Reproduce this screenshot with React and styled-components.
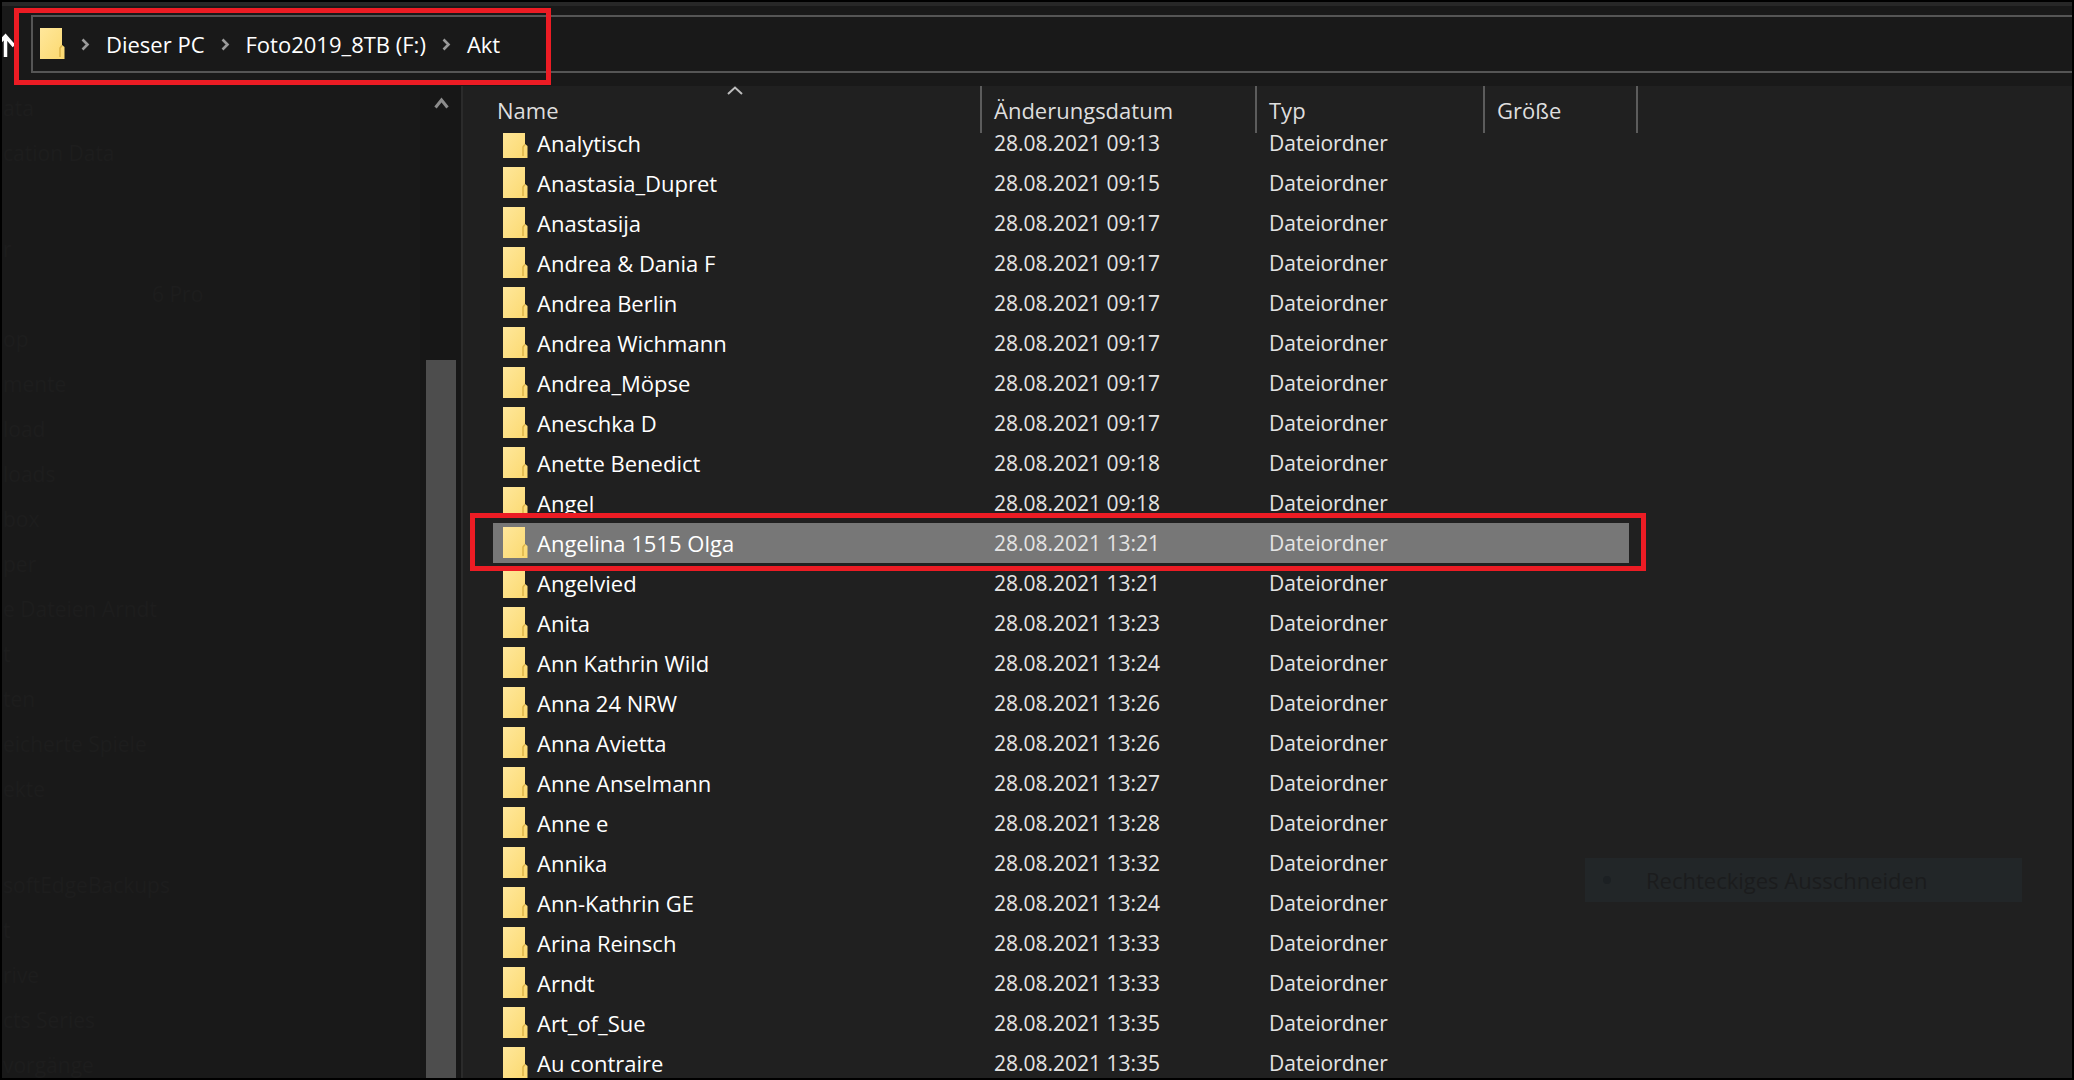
import React, { useState } from 'react'
import styled, { createGlobalStyle } from 'styled-components'

const GlobalStyle = createGlobalStyle`
  * {
    box-sizing: border-box;
  }

  body {
    margin: 0;
    background: #000;
    font-family: "Open Sans", "Noto Sans", sans-serif;
    font-size: 22px;
    color: #fff;
  }

  a {
    color: inherit;
    text-decoration: none;
  }

  button {
    padding: 0;
    border: 0;
    background: none;
    font: inherit;
    color: inherit;
  }
`

const Window = styled.div`
  display: flex;
  flex-direction: column;
  height: 100vh;
  border: 2px solid #000;
  background: #191919;
  overflow: hidden;
`

const Toolbar = styled.header`
  display: flex;
  flex: none;
  height: 84px;
  padding: 9px 0 12px;
  border-top: 4px solid #272727;
`

const UpButton = styled.button`
  display: flex;
  align-items: center;
  width: 29px;
`

const AddressBar = styled.nav`
  position: relative;
  display: flex;
  flex: 1;
  align-items: center;
  gap: 16px;
  height: 58px;
  padding-left: 7px;
  border: 2px solid #555;
  border-right: 0;
`

const Callout = styled.span`
  position: absolute;
  border: 5px solid #ec1c24;
  pointer-events: none;
`

const AddressCallout = styled(Callout)`
  top: -9px;
  left: -19px;
  width: 537px;
  height: 77px;
  z-index: 2;
`

const RowCallout = styled(Callout)`
  inset: -10px -8px -8px -23px;
  z-index: 1;
`

const Body = styled.div`
  display: flex;
  flex: 1;
  min-height: 0;
`

const Sidebar = styled.aside`
  display: flex;
  flex: 0 0 461px;
  border-right: 2px solid #2b2b2b;
  overflow: hidden;
`

const TreeList = styled.ul`
  flex: 1;
  margin: 0;
  padding: 0;
  list-style: none;
  overflow: hidden;
`

const TreeItem = styled.li`
  padding-left: ${({ $indent }) => ($indent ? '150px' : '1px')};
  font-size: 21px;
  line-height: 45px;
  color: #1d1d1d;
  white-space: nowrap;
`

const TreeGap = styled.li`
  height: 51px;
`

const Scrollbar = styled.div`
  display: flex;
  flex-direction: column;
  flex: 0 0 41px;
  padding: 0 5px 0 6px;
  background: #171717;
`

const ScrollUp = styled.button`
  display: flex;
  flex: none;
  align-items: center;
  justify-content: center;
  height: 34px;
`

const ScrollThumb = styled.div`
  flex: 1;
  margin-top: 240px;
  background: #4d4d4d;
`

const Content = styled.main`
  position: relative;
  flex: 1;
  padding-left: 30px;
  background: #202020;
  overflow: hidden;
`

const FileTable = styled.table`
  width: 1145px;
  table-layout: fixed;
  border-collapse: separate;
  border-spacing: 0;
`

const HeaderCell = styled.th`
  width: ${({ $width }) => $width};
  height: 37px;
  padding: 0;
  font-weight: 400;
  text-align: left;
  vertical-align: top;
`

const HeaderButton = styled.button`
  position: relative;
  z-index: 1;
  display: block;
  width: 100%;
  height: 47px;
  margin-bottom: -10px;
  padding-left: ${({ $first }) => ($first ? '4px' : '12px')};
  border-right: 2px solid #5c5c5c;
  background: #202020;
  color: #dedede;
  text-align: left;
`

const SortMark = styled.span`
  position: absolute;
  top: 0;
  left: 0;
  right: 4px;
  display: flex;
  justify-content: center;
`

const Row = styled.tr`
  position: relative;
`

const Cell = styled.td`
  height: 40px;
  padding: 0 0 0 12px;
  background: ${({ $selected }) => ($selected ? '#777' : 'transparent')};
  color: #e4e4e4;
  font-size: 21px;
  line-height: 40px;
  white-space: nowrap;
`

const NameCell = styled(Cell)`
  padding-left: 10px;
  color: #fff;
  font-size: 22px;
`

const SizeCell = styled(Cell)`
  position: relative;
  border-right: 9px solid transparent;
  background-clip: padding-box;
`

const FileName = styled.div`
  display: flex;
  align-items: center;
  gap: 9px;
  height: 40px;
`

const SnipHint = styled.div`
  position: absolute;
  right: 50px;
  bottom: 176px;
  display: flex;
  align-items: center;
  gap: 35px;
  width: 437px;
  height: 44px;
  padding-left: 18px;
  background: #222628;
  color: #1b1c1d;
`

const Bullet = styled.i`
  width: 8px;
  height: 8px;
  border-radius: 50%;
  background: #1c2023;
`

const FolderIcon = () =>
  <svg width="25" height="32" viewBox="0 0 25 32" aria-hidden="true">
    <defs>
      <linearGradient id="folder" x1="0" y1="0" x2="1" y2="1">
        <stop offset="0" stopColor="#ffe79b" />
        <stop offset="1" stopColor="#fbd96f" />
      </linearGradient>
    </defs>
    <path d="M0 0H22V17L24.500 19V31H0Z" fill="url(#folder)" />
    <path d="M20 29V20L22 17.500" fill="none" stroke="#dcb448" strokeWidth="1.500" />
  </svg>

const Chevron = () =>
  <svg width="9" height="13" viewBox="0 0 9 13" aria-hidden="true">
    <path d="M1.500 1.500L6.500 6.500L1.500 11.500" fill="none" stroke="#9a9a9a" strokeWidth="2.600" />
  </svg>

const folders = [
  ['Analytisch', '28.08.2021 09:13'],
  ['Anastasia_Dupret', '28.08.2021 09:15'],
  ['Anastasija', '28.08.2021 09:17'],
  ['Andrea & Dania F', '28.08.2021 09:17'],
  ['Andrea Berlin', '28.08.2021 09:17'],
  ['Andrea Wichmann', '28.08.2021 09:17'],
  ['Andrea_Möpse', '28.08.2021 09:17'],
  ['Aneschka D', '28.08.2021 09:17'],
  ['Anette Benedict', '28.08.2021 09:18'],
  ['Angel', '28.08.2021 09:18'],
  ['Angelina 1515 Olga', '28.08.2021 13:21'],
  ['Angelvied', '28.08.2021 13:21'],
  ['Anita', '28.08.2021 13:23'],
  ['Ann Kathrin Wild', '28.08.2021 13:24'],
  ['Anna 24 NRW', '28.08.2021 13:26'],
  ['Anna Avietta', '28.08.2021 13:26'],
  ['Anne Anselmann', '28.08.2021 13:27'],
  ['Anne e', '28.08.2021 13:28'],
  ['Annika', '28.08.2021 13:32'],
  ['Ann-Kathrin GE', '28.08.2021 13:24'],
  ['Arina Reinsch', '28.08.2021 13:33'],
  ['Arndt', '28.08.2021 13:33'],
  ['Art_of_Sue', '28.08.2021 13:35'],
  ['Au contraire', '28.08.2021 13:35'],
]

// an empty name is a gap between two groups
const treeItems = [
  'ata', 'cation Data', '', 'r', '6 Pro', 'op', 'mente', 'load', 'loads', 'box', 'per',
  'e Dateien Arndt', 't', 'ten', 'eicherte Spiele', 'ekte', '', 'softEdgeBackups', 't', 'rive', 'cts Series', 'vorgänge',
]

const path = ['Dieser PC', 'Foto2019_8TB (F:)', 'Akt']

const columns = [
  { label: 'Name', width: '489px' },
  { label: 'Änderungsdatum', width: '275px' },
  { label: 'Typ', width: '228px' },
  { label: 'Größe', width: '153px' },
]

const AddressPath = () =>
  <AddressBar aria-label="Pfad">
    <FolderIcon />
    {path.map(name =>
      <React.Fragment key={name}>
        <Chevron />
        <a href="#">{name}</a>
      </React.Fragment>
    )}
    <AddressCallout />
  </AddressBar>

const FolderTree = () =>
  <Sidebar>
    <TreeList>
      {treeItems.map((name, i) => (name
        ? <TreeItem key={i} $indent={name === '6 Pro'}><a href="#">{name}</a></TreeItem>
        : <TreeGap key={i} />
      ))}
    </TreeList>
    <Scrollbar>
      <ScrollUp aria-label="Nach oben scrollen">
        <svg width="15" height="12" viewBox="0 0 15 12">
          <path d="M1.500 10.500L7.500 3L13.500 10.500" fill="none" stroke="#8c8c8c" strokeWidth="3" />
        </svg>
      </ScrollUp>
      <ScrollThumb />
    </Scrollbar>
  </Sidebar>

const FolderRow = ({ name, date, selected, onSelect }) =>
  <Row onClick={() => onSelect(name)}>
    <NameCell $selected={selected}><FileName><FolderIcon />{name}</FileName></NameCell>
    <Cell $selected={selected}>{date}</Cell>
    <Cell $selected={selected}>Dateiordner</Cell>
    <SizeCell $selected={selected} />
    {selected && <RowCallout as="td" />}
  </Row>

export default function App() {
  const [selected, setSelected] = useState('Angelina 1515 Olga')

  return (
    <Window>
      <GlobalStyle />
      <Toolbar>
        <UpButton aria-label="Übergeordneter Ordner">
          <svg width="14" height="24" viewBox="0 0 14 24">
            <path d="M3.500 24V3M-5 12L3.500 3L12 13" fill="none" stroke="#fff" strokeWidth="3.500" />
          </svg>
        </UpButton>
        <AddressPath />
      </Toolbar>
      <Body>
        <FolderTree />
        <Content>
          <FileTable>
            <thead>
              <tr>
                {columns.map(({ label, width }, i) =>
                  <HeaderCell key={label} $width={width}>
                    <HeaderButton $first={i === 0}>
                      {label}
                      {i === 0 &&
                        <SortMark>
                          <svg width="16" height="9" viewBox="0 0 16 9">
                            <path d="M1 8L8 1.500L15 8" fill="none" stroke="#bdbdbd" strokeWidth="2" />
                          </svg>
                        </SortMark>
                      }
                    </HeaderButton>
                  </HeaderCell>
                )}
              </tr>
            </thead>
            <tbody>
              {folders.map(([name, date]) =>
                <FolderRow key={name} name={name} date={date} selected={name === selected} onSelect={setSelected} />
              )}
            </tbody>
          </FileTable>
          <SnipHint><Bullet />Rechteckiges Ausschneiden</SnipHint>
        </Content>
      </Body>
    </Window>
  )
}
